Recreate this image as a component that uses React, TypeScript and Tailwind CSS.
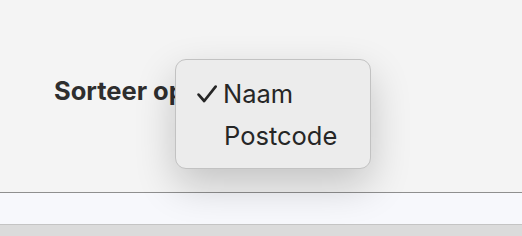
import React from "react";

export default function App() {
  return (
    <div className="relative w-[522px] h-[236px] overflow-hidden flex flex-col bg-[#f4f4f4]" style={{ fontFamily: "Inter, 'Liberation Sans', sans-serif" }}>
      <div className="h-[192px] flex items-start pl-[54px] pt-[76px]">
        <span className="text-[25.5px] leading-[30px] font-bold text-[#2e2e2e]">Sorteer op</span>
      </div>
      <div className="h-px bg-[#8f8f8f]" />
      <div className="h-[31px] bg-[#f7f8fc]" />
      <div className="h-px bg-[#c4c4c4]" />
      <div className="flex-1 bg-[#dbdbdb]" />

      <div className="absolute left-[175px] top-[59px] w-[196px] h-[110px] rounded-[11px] border border-[#c2c2c2] bg-[#ececec] shadow-[0_16px_40px_rgba(0,0,0,0.2)] flex flex-col pt-[13px]">
        <div className="flex items-center h-[42px]">
          <svg className="ml-[21px] w-[20px] h-[18px]" viewBox="0 0 20 18" fill="none">
            <path d="M1.6 9.6 L7.2 16 L18.6 1.6" stroke="#262626" strokeWidth="2.7" strokeLinecap="round" strokeLinejoin="round" />
          </svg>
          <span className="ml-[6px] text-[25.5px] text-[#262626]">Naam</span>
        </div>
        <div className="flex items-center h-[42px]">
          <span className="ml-[48px] text-[25.5px] text-[#262626]">Postcode</span>
        </div>
      </div>
    </div>
  );
}
